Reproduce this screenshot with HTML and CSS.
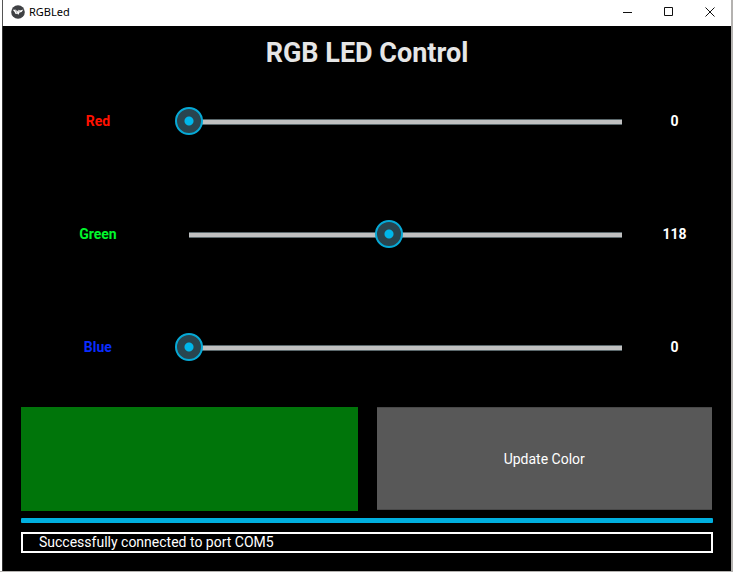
FILE: index.html
```html
<!DOCTYPE html>
<html lang="en">
<head>
<meta charset="utf-8">
<title>RGBLed</title>
<link rel="stylesheet" href="styles.css">
</head>
<body>
<div class="window">
  <header class="titlebar">
    <svg class="app-icon" viewBox="0 0 14 14" aria-hidden="true">
      <circle cx="7" cy="7" r="6.8" fill="#3f4144"/>
      <path d="M1.800 4.800H5L6.200 6.600 7.400 4.800 9 5.600 12.400 4.600 10.600 7 8.600 7.400 7.400 9.800 6.200 8.800 4.600 9 3.600 7z" fill="#fff"/>
      <path d="M4.400 5 6.200 8.400M7.400 5.200 8.400 7.200" fill="none" stroke="#777" stroke-width=".6"/>
    </svg>
    <span class="app-name">RGBLed</span>
    <div class="window-buttons">
      <button class="window-button" type="button" aria-label="Minimize"><svg viewBox="0 0 10 10"><path d="M0 5.5h9"/></svg></button>
      <button class="window-button" type="button" aria-label="Maximize"><svg viewBox="0 0 10 10"><path d="M.5 .5h8v8h-8z"/></svg></button>
      <button class="window-button" type="button" aria-label="Close"><svg viewBox="0 0 10 10"><path d="M.5 .5l9 9M9.500 .5l-9 9"/></svg></button>
    </div>
  </header>
  <main class="content">
    <h1 class="title">RGB LED Control</h1>
    <div class="channels">
      <div class="channel">
        <label class="name red" for="red">Red</label>
        <input class="slider" id="red" type="range" min="0" max="255" value="0">
        <output class="value" for="red">0</output>
      </div>
      <div class="channel">
        <label class="name green" for="green">Green</label>
        <input class="slider" id="green" type="range" min="0" max="255" value="118">
        <output class="value" for="green">118</output>
      </div>
      <div class="channel">
        <label class="name blue" for="blue">Blue</label>
        <input class="slider" id="blue" type="range" min="0" max="255" value="0">
        <output class="value" for="blue">0</output>
      </div>
    </div>
    <div class="actions">
      <div class="swatch"></div>
      <button class="update" type="button">Update Color</button>
    </div>
    <div class="divider"></div>
    <p class="status">Successfully connected to port COM5</p>
  </main>
</div>
</body>
</html>
```
FILE: styles.css
```css
* { box-sizing: border-box; }

body {
  margin: 0;
  background: #fff;
  font-family: Roboto, sans-serif;
}

.window {
  display: flex;
  flex-direction: column;
  height: 100vh;
  border: solid #b4b2b0;
  border-width: 0 2px 1px 0;
  padding-left: 2px;
}

.titlebar {
  display: flex;
  align-items: center;
  height: 26px;
  padding: 0 1px 2px 8px;
  border-left: 1px solid #555;
  background: #fff;
}

.app-icon { width: 14px; height: 14px; margin-right: 4px; }

.app-name {
  font: 11px/16px "Noto Sans", sans-serif;
  color: #000;
}

.window-buttons { display: flex; margin-left: auto; }

.window-button {
  display: flex;
  align-items: center;
  justify-content: center;
  width: 41px;
  height: 24px;
  padding: 0;
  border: 0;
  background: none;
}

.window-button svg {
  width: 10px;
  height: 10px;
  fill: none;
  stroke: #111;
  stroke-width: 1;
}

.content {
  flex: 1;
  display: flex;
  flex-direction: column;
  padding: 9px 18px 18px;
  border-left: 1px solid #333;
  background: #000;
  color: #fff;
}

.title {
  margin: 0;
  font-size: 27px;
  line-height: 36px;
  font-weight: 700;
  text-align: center;
  color: #e6e6e6;
}

.channels {
  flex: 1;
  display: grid;
  grid-auto-rows: 1fr;
  margin: -6px 0 4px;
}

.channel {
  display: grid;
  grid-template-columns: 2fr 6fr 1fr;
  align-items: center;
}

.name, .value {
  font-size: 14px;
  line-height: 20px;
  font-weight: 700;
  text-align: center;
}

.red { color: #f10; }
.green { color: #00f62c; }
.blue { color: #0a2cff; }

.slider {
  appearance: none;
  width: 100%;
  height: 28px;
  margin: 0;
  padding: 0;
  background: none;
}

.slider::-webkit-slider-runnable-track {
  height: 28px;
  padding: 0;
  background: linear-gradient(#5b686c 1px, #c0c0c0 1px, #c0c0c0 5px, #5b686c 5px) 14px 12px / calc(100% - 28px) 6px no-repeat;
}

.slider::-webkit-slider-thumb {
  appearance: none;
  width: 28px;
  height: 28px;
  border: 2px solid #06a9d6;
  border-radius: 50%;
  background: radial-gradient(circle, #00b7ea 4px, #29454f 5px);
}

.actions {
  display: grid;
  grid-template-columns: 1fr 1fr;
  gap: 19px;
  height: 104px;
}

.swatch { background: #00750a; }

.update {
  margin: 0 1px 1px 0;
  padding: 0;
  border: solid #484848;
  border-width: 1px 0;
  background: #585858;
  color: #fff;
  font: 14px/20px Roboto, sans-serif;
}

.divider {
  height: 5px;
  margin: 7px 0 9px;
  border-radius: 1px;
  background: #00afdf;
}

.status {
  margin: 0;
  padding: 0 16px;
  border: 2px solid #fff;
  font-size: 14px;
  line-height: 17px;
}
```
